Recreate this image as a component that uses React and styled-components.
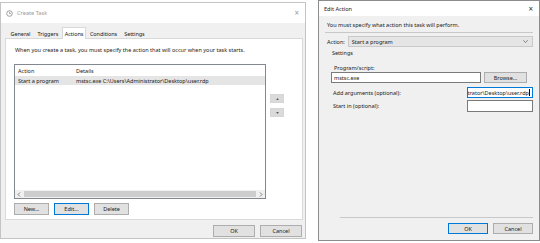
import React from 'react'
import styled, { createGlobalStyle } from 'styled-components'

const GlobalStyle = createGlobalStyle`
  html, body {
    margin: 0;
    padding: 0;
    background: #ffffff;
  }
  body {
    font-family: 'Noto Sans', 'Open Sans', sans-serif;
    font-size: 5.5px;
    color: #1a1a1a;
  }
`

const Desktop = styled.div`
  width: 540px;
  height: 243px;
  display: flex;
  align-items: flex-start;
  gap: 12px;
  overflow: hidden;
`

const Window = styled.div`
  width: ${p => p.$w}px;
  height: ${p => p.$h}px;
  margin-top: ${p => p.$top || 0}px;
  box-sizing: border-box;
  border: 1px solid ${p => p.$border || '#b9b9b9'};
  background: #f0f0f0;
  display: flex;
  flex-direction: column;
`

const TitleBar = styled.div`
  height: ${p => p.$h}px;
  flex-shrink: 0;
  background: #ffffff;
  display: flex;
  align-items: center;
  padding: 0 6px 0 ${p => p.$pl}px;
  gap: 4px;
  color: ${p => p.$color};
  font-size: 5.6px;
`

const TitleText = styled.span`
  flex: 1;
`

const Close = styled.span`
  font-size: 8px;
  color: ${p => p.$color};
  line-height: 1;
`

const Tabs = styled.div`
  display: flex;
  align-items: flex-end;
  height: 12px;
  margin: 3px 0 0 6px;
`

const Tab = styled.div`
  height: ${p => (p.$active ? 12 : 10)}px;
  padding: 0 ${p => (p.$active ? 2 : 2.5)}px;
  display: flex;
  align-items: center;
  box-sizing: border-box;
  background: ${p => (p.$active ? '#ffffff' : 'transparent')};
  border: 1px solid ${p => (p.$active ? '#d9d9d9' : 'transparent')};
  border-bottom: none;
  margin-bottom: ${p => (p.$active ? -1 : 0)}px;
  position: relative;
  z-index: 1;
  letter-spacing: -0.05px;
`

const Panel = styled.div`
  margin: 0 2px 0 4px;
  height: 182px;
  box-sizing: border-box;
  background: #ffffff;
  border: 1px solid #d9d9d9;
  padding: 7px 0 0 8px;
  display: flex;
  flex-direction: column;
`

const Note = styled.div`
  height: 8px;
  line-height: 8px;
  margin-left: ${p => p.$ml || 0}px;
  margin-top: ${p => p.$mt || 0}px;
`

const ListArea = styled.div`
  display: flex;
  gap: 4px;
  margin-top: 10px;
`

const ListBox = styled.div`
  width: 252px;
  height: 135px;
  box-sizing: border-box;
  border: 1px solid #828790;
  display: flex;
  flex-direction: column;
`

const ListRow = styled.div`
  display: flex;
  height: ${p => p.$h}px;
  align-items: center;
  background: ${p => (p.$selected ? '#e5e5e5' : '#ffffff')};
  padding-left: 3px;
`

const Cell = styled.span`
  width: ${p => p.$w}px;
  white-space: nowrap;
`

const ListFill = styled.div`
  flex: 1;
`

const HScroll = styled.div`
  height: 8px;
  background: #f0f0f0;
  display: flex;
  align-items: center;
  padding: 0 2px;
  gap: 3px;
`

const Thumb = styled.div`
  flex: 1;
  height: 6px;
  background: #cdcdcd;
`

const Arrow = styled.svg`
  width: 4px;
  height: 5px;
  flex-shrink: 0;
`

const SideButtons = styled.div`
  display: flex;
  flex-direction: column;
  gap: 5px;
  margin-top: 30px;
`

const MiniButton = styled.div`
  width: 14px;
  height: 9px;
  background: #dadada;
  border: 1px solid #d6d6d6;
  box-sizing: border-box;
  display: flex;
  align-items: center;
  justify-content: center;
`

const ButtonRow = styled.div`
  display: flex;
  gap: 5px;
  margin-top: ${p => p.$mt || 0}px;
  margin-bottom: ${p => p.$mb || 0}px;
  justify-content: ${p => (p.$end ? 'flex-end' : 'flex-start')};
  padding-right: ${p => p.$pr || 0}px;
`

const Button = styled.div`
  width: ${p => p.$w}px;
  height: ${p => p.$h || 12}px;
  box-sizing: border-box;
  background: #e1e1e1;
  border: 1px solid ${p => (p.$focused ? '#0078d7' : '#adadad')};
  display: flex;
  align-items: center;
  justify-content: center;
  flex-shrink: 0;
`

const DialogBody = styled.div`
  flex: 1;
  padding: 5px 6px 0 8px;
  display: flex;
  flex-direction: column;
`

const Rule = styled.div`
  height: 1px;
  background: #c8c8c8;
  margin: ${p => p.$m};
`

const FieldRow = styled.div`
  display: flex;
  align-items: center;
  gap: 3px;
  margin-top: ${p => p.$mt || 0}px;
  margin-left: ${p => p.$ml || 0}px;
`

const Select = styled.div`
  flex: 1;
  height: 11px;
  box-sizing: border-box;
  background: #e5e5e5;
  border: 1px solid #c9c9c9;
  display: flex;
  align-items: center;
  justify-content: space-between;
  padding: 0 4px 0 3px;
`

const Input = styled.div`
  width: ${p => p.$w}px;
  height: ${p => p.$h || 11}px;
  box-sizing: border-box;
  background: #ffffff;
  border: 1px solid ${p => (p.$focused ? '#0078d7' : '#7a7a7a')};
  display: flex;
  align-items: center;
  justify-content: ${p => (p.$right ? 'flex-end' : 'flex-start')};
  padding: 0 2px;
  overflow: hidden;
  white-space: nowrap;
`

const Caret = styled.span`
  display: inline-block;
  width: 0.6px;
  height: 7px;
  background: #000;
  margin-left: 0.5px;
  flex-shrink: 0;
`

const Label = styled.span`
  flex: 1;
`

const Spacer = styled.div`
  flex: 1;
`

const ClockIcon = () => (
  <svg width="7" height="7" viewBox="0 0 10 10">
    <circle cx="5" cy="5" r="4" fill="none" stroke="#8a8a8a" strokeWidth="1.2" />
    <path d="M5 2.6V5h2" fill="none" stroke="#8a8a8a" strokeWidth="1.1" />
  </svg>
)

const Tri = ({ down }) => (
  <svg width="3" height="2" viewBox="0 0 4 3">
    <path d={down ? 'M0 0h4L2 3z' : 'M0 3h4L2 0z'} fill="#555" />
  </svg>
)

const Chevron = () => (
  <svg width="5" height="3" viewBox="0 0 5 3">
    <path d="M0.3 0.3L2.5 2.5 4.7 0.3" fill="none" stroke="#555" strokeWidth="0.7" />
  </svg>
)

const tabs = ['General', 'Triggers', 'Actions', 'Conditions', 'Settings']

const CreateTask = () => (
  <Window $w={306} $h={237} $top={2} $border="#c4c4c4">
    <TitleBar $h={20} $pl={5} $color="#9a9a9a">
      <ClockIcon />
      <TitleText>Create Task</TitleText>
      <Close $color="#9a9a9a">×</Close>
    </TitleBar>
    <Tabs>
      {tabs.map(t => (
        <Tab key={t} $active={t === 'Actions'}>{t}</Tab>
      ))}
    </Tabs>
    <Panel>
      <Note $ml={1}>When you create a task, you must specify the action that will occur when your task starts.</Note>
      <ListArea>
        <ListBox>
          <ListRow $h={11}>
            <Cell $w={58}>Action</Cell>
            <Cell>Details</Cell>
          </ListRow>
          <ListRow $h={9} $selected>
            <Cell $w={58}>Start a program</Cell>
            <Cell>mstsc.exe C:\Users\Administrator\Desktop\user.rdp</Cell>
          </ListRow>
          <ListFill />
          <HScroll>
            <Arrow viewBox="0 0 4 5"><path d="M3 0.5L1 2.5 3 4.5" fill="none" stroke="#606060" strokeWidth="0.8" /></Arrow>
            <Thumb />
            <Arrow viewBox="0 0 4 5"><path d="M1 0.5L3 2.5 1 4.5" fill="none" stroke="#606060" strokeWidth="0.8" /></Arrow>
          </HScroll>
        </ListBox>
        <SideButtons>
          <MiniButton><Tri /></MiniButton>
          <MiniButton><Tri down /></MiniButton>
        </SideButtons>
      </ListArea>
      <ButtonRow $mt={4}>
        <Button $w={35}>New...</Button>
        <Button $w={35} $focused>Edit...</Button>
        <Button $w={35}>Delete</Button>
      </ButtonRow>
    </Panel>
    <ButtonRow $mt={5} $end $pr={3}>
      <Button $w={42}>OK</Button>
      <Button $w={42}>Cancel</Button>
    </ButtonRow>
  </Window>
)

const EditAction = () => (
  <Window $w={222} $h={241} $border="#8c8c8c">
    <TitleBar $h={15} $pl={5} $color="#1a1a1a">
      <TitleText>Edit Action</TitleText>
      <Close $color="#333">×</Close>
    </TitleBar>
    <DialogBody>
      <Note>You must specify what action this task will perform.</Note>
      <Rule $m="3px 0 3px -2px" />
      <FieldRow>
        <span>Action:</span>
        <Select>
          <span>Start a program</span>
          <Chevron />
        </Select>
      </FieldRow>
      <Note $ml={5} $mt={2}>Settings</Note>
      <Note $ml={7} $mt={7}>Program/script:</Note>
      <FieldRow $ml={4}>
        <Input $w={150}>mstsc.exe</Input>
        <Button $w={43} $h={11}>Browse...</Button>
      </FieldRow>
      <FieldRow $mt={4} $ml={6}>
        <Label>Add arguments (optional):</Label>
        <Input $w={66} $focused $right>strator\Desktop\user.rdp<Caret /></Input>
      </FieldRow>
      <FieldRow $mt={2} $ml={6}>
        <Label>Start in (optional):</Label>
        <Input $w={66} $h={12} />
      </FieldRow>
      <Spacer />
      <Rule $m="0 0 5px 13px" />
      <ButtonRow $end $mb={6}>
        <Button $w={40} $h={11} $focused>OK</Button>
        <Button $w={40} $h={11}>Cancel</Button>
      </ButtonRow>
    </DialogBody>
  </Window>
)

const App = () => (
  <>
    <GlobalStyle />
    <Desktop>
      <CreateTask />
      <EditAction />
    </Desktop>
  </>
)

export default App
